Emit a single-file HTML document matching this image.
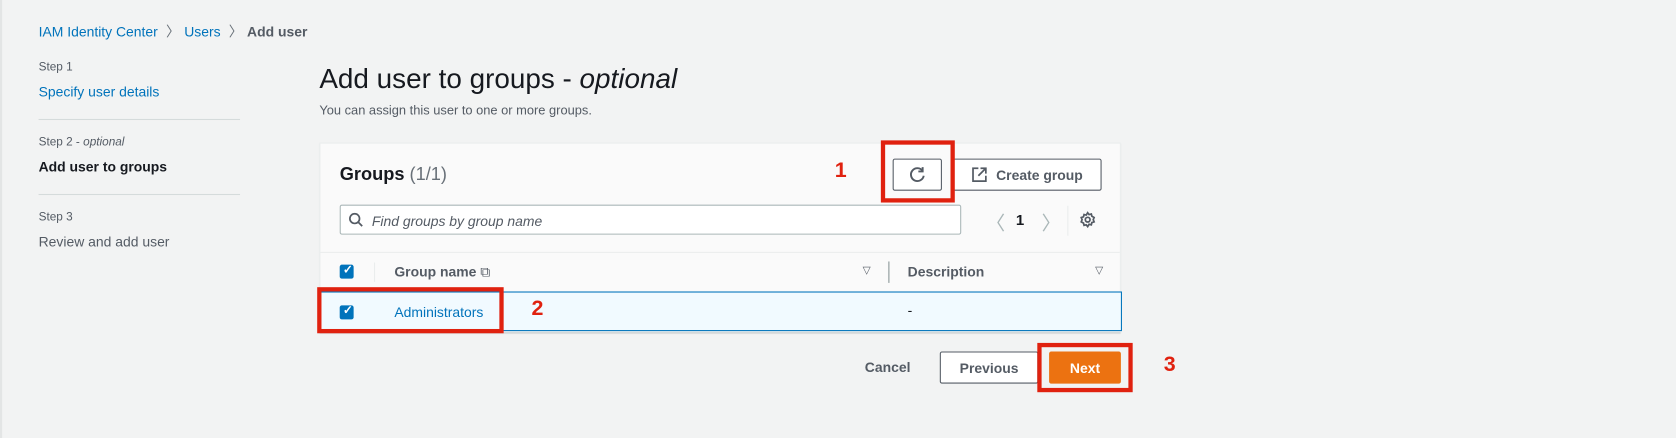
<!DOCTYPE html>
<html><head><meta charset="utf-8"><style>
*{box-sizing:border-box;margin:0;padding:0}
html,body{width:1676px;height:438px;overflow:hidden;background:#f2f3f3}
#w{position:absolute;left:0;top:0;width:1564px;height:409px;transform:scale(1.0716);transform-origin:0 0;font-family:"Liberation Sans",sans-serif;color:#16191f}
.a{position:absolute;white-space:nowrap}
.blue{color:#0073bb}
.hr{position:absolute;height:1px;background:#d5dbdb}
.btn{position:absolute;border:1px solid #545b64;background:#fff;border-radius:2px;font-weight:bold;font-size:13px;color:#545b64;display:flex;align-items:center;justify-content:center}
.red{position:absolute;border:4px solid #e0210f}
.rn{position:absolute;color:#e0210f;font-weight:bold;font-size:20px}
.cb{position:absolute;width:13px;height:13px;background:#0073bb;border-radius:2px}
</style></head><body><div id="w">
<div class="a" style="left:0;top:0;width:2px;height:409px;background:#e3e5e5"></div>
<div class="a" style="left:36px;top:19px;font-size:13px"><span class="blue">IAM Identity Center</span> <span style="color:#687078;margin:0 4px">〉</span><span class="blue">Users</span> <span style="color:#687078;margin:0 4px">〉</span><b style="color:#545b64">Add user</b></div>
<div class="a" style="left:36px;top:57px;font-size:11px;color:#545b64">Step 1</div>
<div class="a blue" style="left:36px;top:78px;font-size:13px">Specify user details</div>
<div class="hr" style="left:36px;top:111px;width:188px"></div>
<div class="a" style="left:36px;top:127px;font-size:11px;color:#545b64">Step 2 - <i>optional</i></div>
<div class="a" style="left:36px;top:148px;font-size:13px;font-weight:bold">Add user to groups</div>
<div class="hr" style="left:36px;top:181px;width:188px"></div>
<div class="a" style="left:36px;top:197px;font-size:11px;color:#545b64">Step 3</div>
<div class="a" style="left:36px;top:218px;font-size:13px;color:#545b64">Review and add user</div>

<div class="a" style="left:298px;top:58px;font-size:26px">Add user to groups - <i>optional</i></div>
<div class="a" style="left:298px;top:96px;font-size:12px;color:#545b64">You can assign this user to one or more groups.</div>

<div class="a" style="left:298px;top:133px;width:748px;height:177px;background:#fafafa;border:1px solid #eaeded;box-shadow:0 1px 1px rgba(0,28,36,.2)"></div>
<div class="a" style="left:317px;top:153px;font-size:17px;font-weight:bold">Groups <span style="font-weight:normal;color:#687078">(1/1)</span></div>
<div class="btn" style="left:833px;top:148px;width:46px;height:30px"><svg width="16" height="16" viewBox="0 0 16 16" fill="none" stroke="#545b64" stroke-width="1.8"><path d="M13 4.5A6 6 0 1 0 14 9"/><path d="M13 1v4h-4"/></svg></div>
<div class="btn" style="left:889px;top:148px;width:139px;height:30px"><svg width="14" height="14" viewBox="0 0 14 14" fill="none" stroke="#545b64" stroke-width="1.6" style="margin-right:9px"><path d="M6 1H1v12h12V8M8 1h5v5M13 1L6 8"/></svg>Create group</div>
<div class="a" style="left:317px;top:191px;width:580px;height:28px;background:#fff;border:1px solid #aab7b8;border-radius:2px"></div>
<svg class="a" style="left:325px;top:198px" width="14" height="14" viewBox="0 0 14 14" fill="none" stroke="#545b64" stroke-width="1.6"><circle cx="6" cy="6" r="4.5"/><path d="M9.5 9.5L13 13"/></svg>
<div class="a" style="left:347px;top:199px;font-size:13px;font-style:italic;color:#545b64">Find groups by group name</div>
<div class="a" style="left:920px;top:194px;font-size:18px;color:#aab7b8">〈</div>
<div class="a" style="left:948px;top:197px;font-size:14px;font-weight:bold">1</div>
<div class="a" style="left:972px;top:194px;font-size:18px;color:#aab7b8">〉</div>
<div class="a" style="left:996px;top:192px;width:1px;height:28px;background:#eaeded"></div>
<svg class="a" style="left:1007px;top:197px" width="16" height="16" viewBox="0 0 16 16" fill="none" stroke="#545b64" stroke-width="1.6"><circle cx="8" cy="8" r="2.2"/><path d="M8 1.5l1.3 1.7 2.1-.5.5 2.1L14 6l-.8 2 .8 2-2.1.7-.5 2.1-2.1-.5L8 14.5l-1.3-1.7-2.1.5-.5-2.1L2 10l.8-2L2 6l2.1-.7.5-2.1 2.1.5z"/></svg>
<div class="hr" style="left:299px;top:235px;width:746px;background:#eaeded"></div>
<div class="cb" style="left:317px;top:247px"></div><div class="a" style="left:320px;top:245px;color:#fff;font-size:11px;font-weight:bold">✓</div>
<div class="a" style="left:349px;top:245px;width:1px;height:18px;background:#eaeded"></div>
<div class="a" style="left:368px;top:246px;font-size:13px;font-weight:bold;color:#545b64">Group name <span style="font-weight:normal">⧉</span></div>
<div class="a" style="left:805px;top:247px;font-size:10px;color:#545b64">▽</div>
<div class="a" style="left:829px;top:244px;width:1px;height:20px;background:#879596"></div>
<div class="a" style="left:847px;top:246px;font-size:13px;font-weight:bold;color:#545b64">Description</div>
<div class="a" style="left:1022px;top:247px;font-size:10px;color:#545b64">▽</div>
<div class="a" style="left:298px;top:272px;width:749px;height:37px;background:#f1faff;border:1px solid #0073bb"></div>
<div class="cb" style="left:317px;top:285px"></div><div class="a" style="left:320px;top:283px;color:#fff;font-size:11px;font-weight:bold">✓</div>
<div class="a blue" style="left:368px;top:284px;font-size:13px">Administrators</div>
<div class="a" style="left:847px;top:282px;font-size:13px">-</div>

<div class="a" style="left:807px;top:335px;font-size:13px;font-weight:bold;color:#545b64">Cancel</div>
<div class="btn" style="left:877px;top:328px;width:92px;height:30px">Previous</div>
<div class="btn" style="left:979px;top:328px;width:67px;height:30px;background:#ec7211;border-color:#ec7211;color:#fff">Next</div>

<div class="red" style="left:822px;top:131px;width:69px;height:58px"></div>
<div class="red" style="left:296px;top:268px;width:174px;height:43px"></div>
<div class="red" style="left:968px;top:320px;width:89px;height:46px"></div>
<div class="rn" style="left:779px;top:148px">1</div>
<div class="rn" style="left:496px;top:277px">2</div>
<div class="rn" style="left:1086px;top:329px">3</div>
</div></body></html>
